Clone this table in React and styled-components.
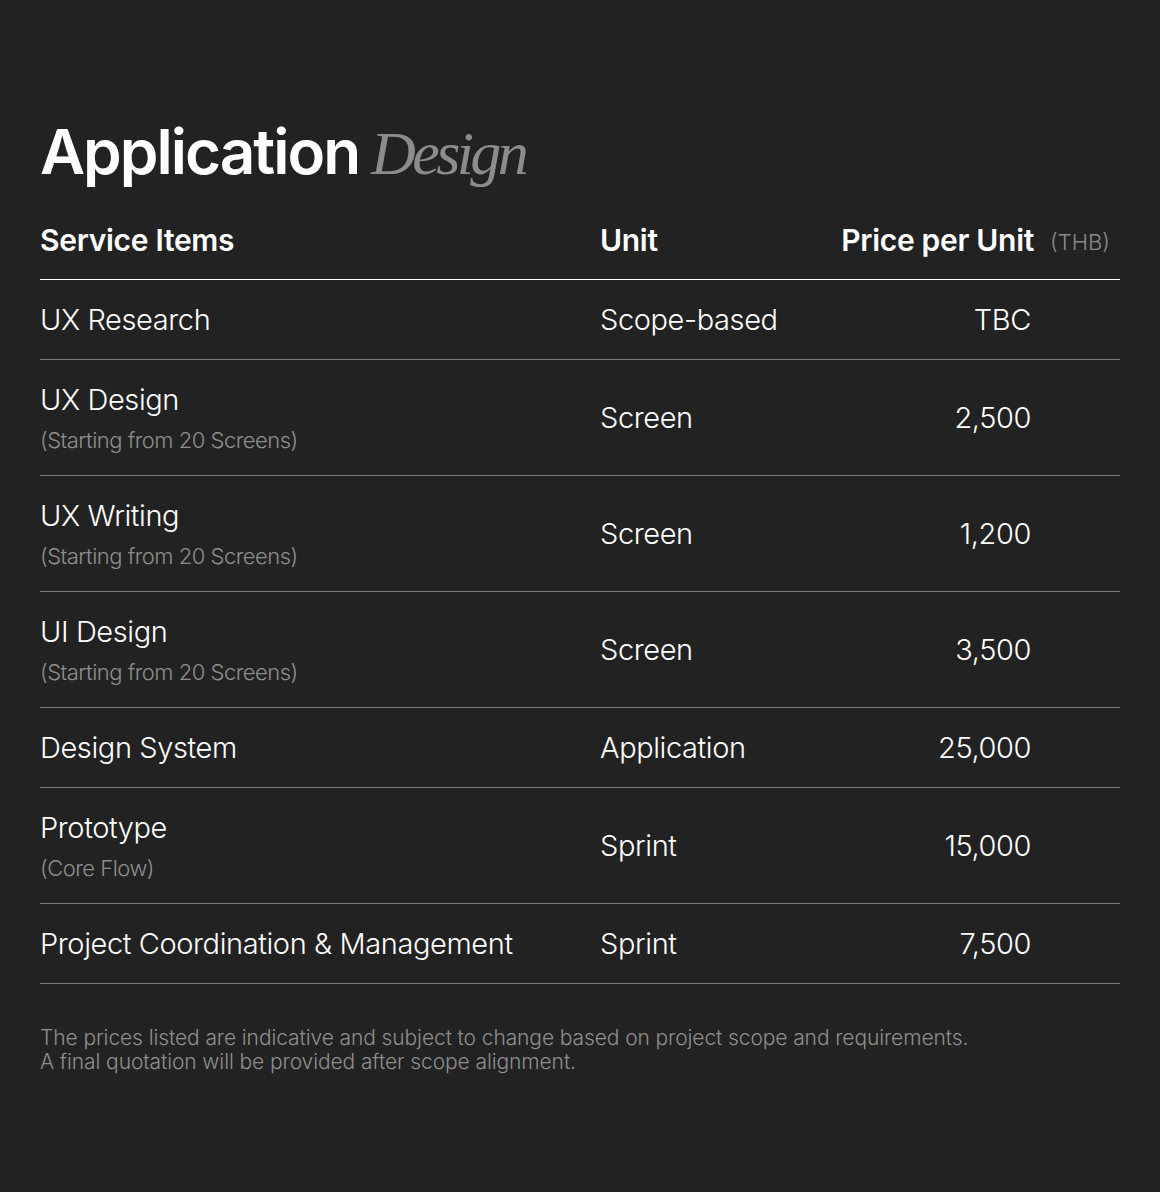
import React from 'react'
import styled, { createGlobalStyle } from 'styled-components'

const GlobalStyle = createGlobalStyle`
body {
  margin: 0;
  background-color: #222222;
  font-family: Inter, "Noto Sans", sans-serif;
  color: #ffffff;
}
`

const Page = styled.div`
width: 1160px;
min-height: 1192px;
box-sizing: border-box;
padding: 112px 40px 0 40px;
background-color: #222222;
`

const Heading = styled.h1`
margin: 0;
display: flex;
align-items: baseline;
gap: 12px;
font-size: 62px;
line-height: 80px;
font-weight: 600;
letter-spacing: -2px;
`

const HeadingAccent = styled.span`
font-family: "Liberation Serif", "DejaVu Serif", serif;
font-style: italic;
font-weight: 400;
font-size: 62px;
letter-spacing: -3.6px;
color: #8c8c8c;
`

const Table = styled.div`
margin-top: 15px;
display: flex;
flex-direction: column;
`

const Row = styled.div`
display: grid;
grid-template-columns: 560px 1fr 240px 89px;
align-items: center;
padding: 22px 0 21px 0;
border-bottom: 1px solid ${({head}) => head ? '#ffffff' : '#7c7c7c'};
${({head}) => head && 'padding: 10px 0 17px 0;'}
`

const HeadCell = styled.div`
font-size: 30px;
line-height: 40px;
font-weight: 600;
letter-spacing: -0.3px;
text-align: ${({right}) => right ? 'right' : 'left'};
${({right}) => right && 'margin-right: -3px;'}
`

const Currency = styled.div`
padding-left: 19px;
font-size: 22px;
font-weight: 300;
color: #8a8a8a;
line-height: 40px;
padding-top: 4px;
`

const ItemCell = styled.div`
display: flex;
flex-direction: column;
`

const ItemName = styled.div`
font-size: 29px;
line-height: 36px;
font-weight: 300;
letter-spacing: -0.4px;
`

const ItemNote = styled.div`
margin-top: 8px;
font-size: 22px;
line-height: 28px;
font-weight: 300;
letter-spacing: -0.5px;
color: #8e8e8e;
`

const Cell = styled.div`
font-size: 29px;
line-height: 36px;
font-weight: 300;
letter-spacing: -0.4px;
text-align: ${({right}) => right ? 'right' : 'left'};
`

const Footnote = styled.p`
margin: 42px 0 0 0;
font-size: 21px;
line-height: 24px;
font-weight: 300;
letter-spacing: -0.1px;
color: #8f8f8f;
`

const services = [
  { name: 'UX Research', unit: 'Scope-based', price: 'TBC' },
  { name: 'UX Design', note: '(Starting from 20 Screens)', unit: 'Screen', price: '2,500' },
  { name: 'UX Writing', note: '(Starting from 20 Screens)', unit: 'Screen', price: '1,200' },
  { name: 'UI Design', note: '(Starting from 20 Screens)', unit: 'Screen', price: '3,500' },
  { name: 'Design System', unit: 'Application', price: '25,000' },
  { name: 'Prototype', note: '(Core Flow)', unit: 'Sprint', price: '15,000' },
  { name: 'Project Coordination & Management', unit: 'Sprint', price: '7,500' },
]

export default function App() {
  return (
    <>
      <GlobalStyle />
      <Page>
        <Heading>
          Application <HeadingAccent>Design</HeadingAccent>
        </Heading>
        <Table>
          <Row head>
            <HeadCell>Service Items</HeadCell>
            <HeadCell>Unit</HeadCell>
            <HeadCell right>Price per Unit</HeadCell>
            <Currency>(THB)</Currency>
          </Row>
          {services.map(item => (
            <Row key={item.name}>
              <ItemCell>
                <ItemName>{item.name}</ItemName>
                {item.note && <ItemNote>{item.note}</ItemNote>}
              </ItemCell>
              <Cell>{item.unit}</Cell>
              <Cell right>{item.price}</Cell>
            </Row>
          ))}
        </Table>
        <Footnote>
          The prices listed are indicative and subject to change based on project scope and requirements.
          <br />
          A final quotation will be provided after scope alignment.
        </Footnote>
      </Page>
    </>
  )
}
